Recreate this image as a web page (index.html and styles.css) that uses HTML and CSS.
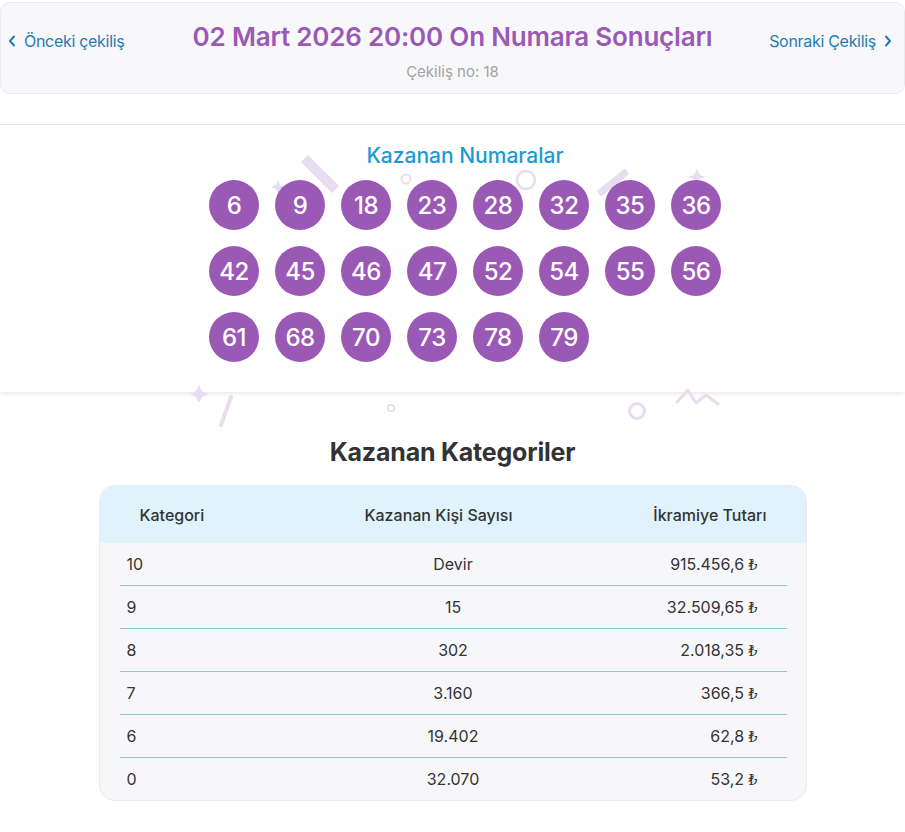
FILE: index.html
```html
<!DOCTYPE html>
<html lang="tr">
<head>
<meta charset="utf-8">
<title>On Numara Sonuçları</title>
<link rel="stylesheet" href="styles.css">
</head>
<body>
<header class="draw-head">
  <div class="head-row">
    <a class="nav prev" href="#"><svg class="chev" viewBox="0 0 8 12" width="8" height="12"><path d="M6 1.5 L2 6 L6 10.5" fill="none" stroke="currentColor" stroke-width="2" stroke-linecap="round" stroke-linejoin="round"/></svg>Önceki çekiliş</a>
    <h1 class="title">02 Mart 2026 20:00 On Numara Sonuçları</h1>
    <a class="nav next" href="#">Sonraki Çekiliş<svg class="chev" viewBox="0 0 8 12" width="8" height="12"><path d="M2 1.5 L6 6 L2 10.5" fill="none" stroke="currentColor" stroke-width="2" stroke-linecap="round" stroke-linejoin="round"/></svg></a>
  </div>
  <div class="draw-no">Çekiliş no: 18</div>
</header>

<section class="results">
  <svg class="confetti" viewBox="0 125 905 320" width="905" height="320" aria-hidden="true">
    <g fill="#e8ddf0" stroke="#e8ddf0">
      <rect x="298" y="170" width="44" height="10" stroke="none" transform="rotate(45 320 175)"/>
      <path d="M278 181 L280 186 L285 188 L280 190 L278 195 L276 190 L271 188 L276 186 Z" stroke="none"/>
      <circle cx="406" cy="180" r="4.5" fill="none" stroke-width="2"/>
      <circle cx="526" cy="181" r="9" fill="none" stroke-width="2.5"/>
      <rect x="595" y="180" width="36" height="7" stroke="none" transform="rotate(-39 613 183.5)"/>
      <path d="M697 170 L700 176 L706 178 L700 180 L697 186 L694 180 L688 178 L694 176 Z" stroke="none"/>
      <path d="M199 386 L202 392 L208 395 L202 398 L199 404 L196 398 L190 395 L196 392 Z" stroke="none"/>
      <line x1="231" y1="398" x2="221" y2="426" stroke-width="4" stroke-linecap="round"/>
      <circle cx="391" cy="409" r="3.2" fill="none" stroke="#dcd4e2" stroke-width="1.3"/>
      <circle cx="637" cy="412" r="7.5" fill="none" stroke-width="3"/>
      <polyline points="677,403 688,391 696,404 706,396 718,405" fill="none" stroke-width="3" stroke-linejoin="round" stroke-linecap="round"/>
    </g>
  </svg>
  <h2 class="win-title">Kazanan Numaralar</h2>
  <div class="balls">
    <span class="ball">6</span><span class="ball">9</span><span class="ball">18</span><span class="ball">23</span>
    <span class="ball">28</span><span class="ball">32</span><span class="ball">35</span><span class="ball">36</span>
    <span class="ball">42</span><span class="ball">45</span><span class="ball">46</span><span class="ball">47</span>
    <span class="ball">52</span><span class="ball">54</span><span class="ball">55</span><span class="ball">56</span>
    <span class="ball">61</span><span class="ball">68</span><span class="ball">70</span><span class="ball">73</span>
    <span class="ball">78</span><span class="ball">79</span>
  </div>
</section>

<section class="categories">
  <h2 class="cat-title">Kazanan Kategoriler</h2>
  <div class="cat-table">
    <div class="cat-head">
      <span>Kategori</span>
      <span class="c">Kazanan Kişi Sayısı</span>
      <span class="r">İkramiye Tutarı</span>
    </div>
    <div class="cat-body">
      <div class="cat-row"><span>10</span><span class="c">Devir</span><span class="r">915.456,6 <i class="tl">₺</i></span></div>
      <div class="cat-row"><span>9</span><span class="c">15</span><span class="r">32.509,65 <i class="tl">₺</i></span></div>
      <div class="cat-row"><span>8</span><span class="c">302</span><span class="r">2.018,35 <i class="tl">₺</i></span></div>
      <div class="cat-row"><span>7</span><span class="c">3.160</span><span class="r">366,5 <i class="tl">₺</i></span></div>
      <div class="cat-row"><span>6</span><span class="c">19.402</span><span class="r">62,8 <i class="tl">₺</i></span></div>
      <div class="cat-row"><span>0</span><span class="c">32.070</span><span class="r">53,2 <i class="tl">₺</i></span></div>
    </div>
  </div>
</section>
</body>
</html>
```
FILE: styles.css
```css
* { box-sizing: border-box; }

body {
  margin: 0;
  background: #ffffff;
  color: #333333;
  font-family: Inter, Roboto, "Noto Sans", sans-serif;
}

.draw-head {
  margin-top: 2px;
  background: #f8f8fa;
  border: 1px solid #ebebef;
  border-radius: 10px;
  padding: 17px 0 11px;
}

.head-row {
  display: grid;
  grid-template-columns: 1fr auto 1fr;
  align-items: center;
}

.title {
  margin: 0;
  font-size: 26px;
  line-height: 34px;
  font-weight: 600;
  color: #9b59b6;
  white-space: nowrap;
  letter-spacing: -0.2px;
}

.nav {
  display: flex;
  align-items: center;
  gap: 8px;
  margin-top: 8px;
  font-size: 16px;
  line-height: 20px;
  color: #1f7cb2;
  text-decoration: none;
  letter-spacing: -0.3px;
}

.prev { justify-self: start; padding-left: 7px; }
.next { justify-self: end; padding-right: 12px; }

.draw-no {
  margin-top: 8px;
  text-align: center;
  font-size: 15px;
  line-height: 20px;
  color: #a3a3a3;
}

.results {
  position: relative;
  margin-top: 30px;
  padding: 19px 0 30px 25px;
  background: #ffffff;
  border-top: 1px solid #e6e6e8;
  box-shadow: 0 3px 5px -1px rgba(0, 0, 0, 0.09);
}

.confetti {
  position: absolute;
  top: -1px;
  left: 0;
  pointer-events: none;
}

.win-title {
  position: relative;
  margin: 0;
  text-align: center;
  font-size: 21px;
  line-height: 24px;
  font-weight: 500;
  color: #1b9bd5;
}

.balls {
  position: relative;
  margin-top: 12px;
  display: grid;
  grid-template-columns: repeat(8, 50px);
  gap: 16px;
  justify-content: center;
}

.ball {
  width: 50px;
  height: 50px;
  border-radius: 50%;
  background: #9b59b6;
  color: #ffffff;
  display: flex;
  align-items: center;
  justify-content: center;
  font-size: 24px;
  font-weight: 500;
  letter-spacing: -0.5px;
}

.categories {
  padding-top: 45px;
}

.cat-title {
  margin: 0;
  text-align: center;
  font-size: 25px;
  line-height: 30px;
  font-weight: 700;
  color: #333333;
  letter-spacing: -0.2px;
}

.cat-table {
  width: 708px;
  margin: 18px auto 0;
  background: #f7f7f9;
  border: 1px solid #ebebef;
  border-radius: 16px;
  overflow: hidden;
}

.cat-head {
  height: 57px;
  display: grid;
  grid-template-columns: 200px 198px 1fr;
  align-items: center;
  padding: 0 39px 0 40px;
  background: #e0f3fd;
  font-size: 16px;
  font-weight: 500;
  color: #333333;
}

.cat-body {
  padding: 0 19px 0 20px;
}

.cat-row {
  height: 43px;
  display: grid;
  grid-template-columns: 1fr 200px 1fr;
  align-items: center;
  padding: 0 7px;
  border-bottom: 1px solid #8fc5df;
  font-size: 16px;
  color: #333333;
}

.cat-row:last-child {
  height: 42px;
  border-bottom: none;
}

.c { text-align: center; }
.r { text-align: right; }
.cat-row .r { padding-right: 22px; }

.tl {
  font-style: normal;
  font-family: "DejaVu Serif", serif;
  font-size: 14px;
}
```
